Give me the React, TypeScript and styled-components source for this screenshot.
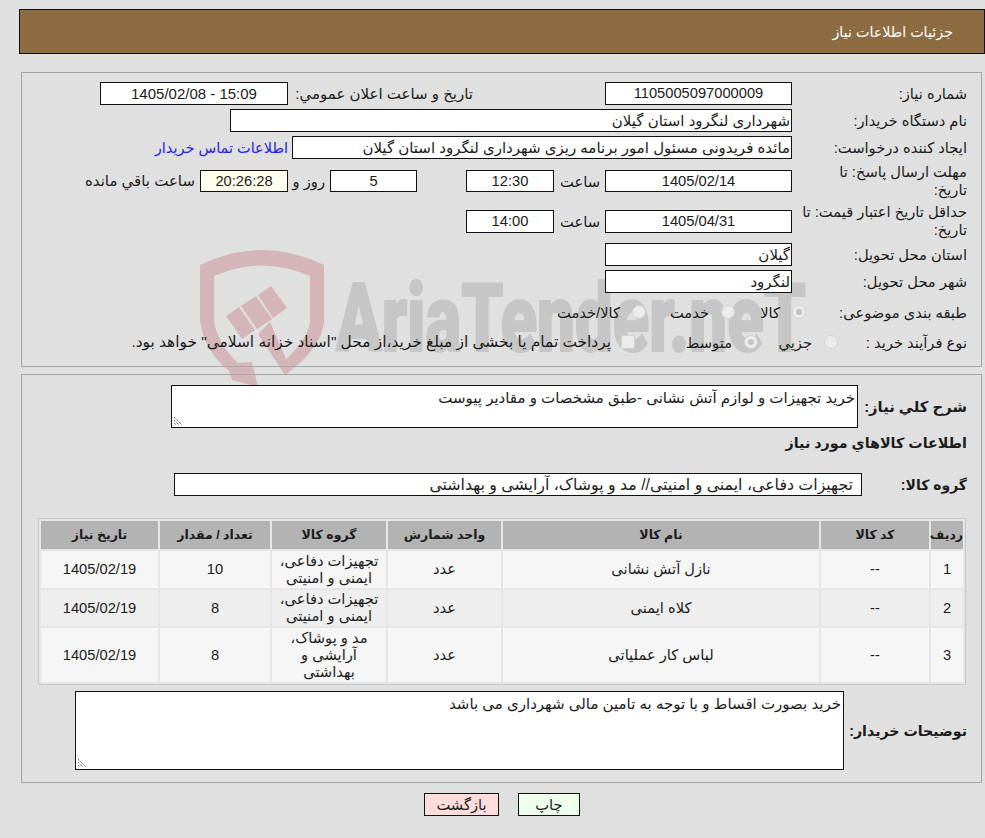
import styled, { createGlobalStyle } from "styled-components";

const GlobalStyle = createGlobalStyle`
  html {
    background: #e0e0e0;
  }

  body {
    margin: 0;
    padding: 0;
    font-family: "Liberation Sans", "DejaVu Sans", sans-serif;
    font-size: 14.7px;
    color: #1c1c1c;
  }
`;

const COLUMNS = [
  { title: "ردیف", width: 32 },
  { title: "کد کالا", width: 108 },
  { title: "نام کالا", width: 316 },
  { title: "واحد شمارش", width: 113 },
  { title: "گروه کالا", width: 114 },
  { title: "تعداد / مقدار", width: 110 },
  { title: "تاریخ نیاز", width: 117 },
];

const ITEMS = [
  { row: "1", name: "نازل آتش نشانی", group: "تجهیزات دفاعی، ایمنی و امنیتی", qty: "10", height: 37 },
  { row: "2", name: "کلاه ایمنی", group: "تجهیزات دفاعی، ایمنی و امنیتی", qty: "8", height: 36 },
  { row: "3", name: "لباس کار عملیاتی", group: "مد و پوشاک، آرایشی و بهداشتی", qty: "8", height: 54 },
];

function Watermark() {
  return (
    <WatermarkSvg viewBox="0 0 700 170" aria-hidden="true">
      <path
        fill="#d5b6b8"
        d="M5 30 Q67 0 129 30 L129 88 Q125 115 90 140 L88 127 Q112 105 115 88 L115 41 Q67 20 19 41 L19 85 Q22 108 43 128 L57 127 L63 152 L37 145 L34 136 Q8 115 5 85 Z"
      />
      <path
        fill="#d5b6b8"
        d="M31 81 L44 72 L60 95 L47 104 Z M46 71 L61 61 L77 84 L62 94 Z M63 60 L76 51 L92 73 L78 83 Z M63 99 L75 87 L95 133 L90 140 Z"
      />
      <WatermarkText x="141" y="116" textLength="470" lengthAdjust="spacingAndGlyphs">
        AriaTender.neT
      </WatermarkText>
    </WatermarkSvg>
  );
}

function Grip() {
  return (
    <GripSvg viewBox="0 0 10 9" aria-hidden="true">
      <path d="M1 0 L9 8 M1 3 L6 8 M1 6 L3 8" stroke="#666" strokeWidth="1" strokeDasharray="1.5 0.7" fill="none" />
    </GripSvg>
  );
}

export default function App() {
  return (
    <>
      <GlobalStyle />
      <Page dir="rtl">
        <Watermark />
        <TitleBar>جزئیات اطلاعات نیاز</TitleBar>

        <Panel>
          <FormRow>
            <Label>شماره نیاز:</Label>
            <DateBox>1105005097000009</DateBox>
            <SideLabel>تاریخ و ساعت اعلان عمومي:</SideLabel>
            <StampBox>1405/02/08 - 15:09</StampBox>
          </FormRow>

          <FormRow>
            <Label>نام دستگاه خریدار:</Label>
            <WideBox $width={562}>شهرداری لنگرود استان گیلان</WideBox>
          </FormRow>

          <FormRow>
            <Label>ایجاد کننده درخواست:</Label>
            <WideBox $width={500}>مائده فریدونی مسئول امور برنامه ریزی شهرداری لنگرود استان گیلان</WideBox>
            <ContactLink href="#">اطلاعات تماس خریدار</ContactLink>
          </FormRow>

          <FormRow>
            <Label>
              مهلت ارسال پاسخ: تا
              <br />
              تاریخ:
            </Label>
            <DateBox $short>1405/02/14</DateBox>
            <Word $width={51}>ساعت</Word>
            <TimeBox $short>12:30</TimeBox>
            <DaysBox $short>5</DaysBox>
            <Word $width={42}>روز و</Word>
            <CountdownBox $short>20:26:28</CountdownBox>
            <Word>ساعت باقي مانده</Word>
          </FormRow>

          <FormRow>
            <Label>
              حداقل تاریخ اعتبار قیمت: تا
              <br />
              تاریخ:
            </Label>
            <DateBox>1405/04/31</DateBox>
            <Word $width={51}>ساعت</Word>
            <TimeBox>14:00</TimeBox>
          </FormRow>

          <FormRow>
            <Label>استان محل تحویل:</Label>
            <WideBox $width={187}>گیلان</WideBox>
          </FormRow>

          <FormRow>
            <Label>شهر محل تحویل:</Label>
            <WideBox $width={187}>لنگرود</WideBox>
          </FormRow>

          <ChoiceRow $height={30}>
            <ChoiceLabel $width={161}>طبقه بندی موضوعی:</ChoiceLabel>
            <Choice $width={71}><Radio $checked />کالا</Choice>
            <Choice $width={89}><Radio />خدمت</Choice>
            <Choice><Radio />کالا/خدمت</Choice>
          </ChoiceRow>

          <ChoiceRow $height={22}>
            <ChoiceLabel $width={129}>نوع فرآیند خرید :</ChoiceLabel>
            <Choice $width={80}><Radio />جزيي</Choice>
            <Choice $width={123}><Radio $checked />متوسط</Choice>
            <NoticeChoice><CheckMark />پرداخت تمام یا بخشی از مبلغ خرید،از محل "اسناد خزانه اسلامی" خواهد بود.</NoticeChoice>
          </ChoiceRow>
        </Panel>

        <LowerPanel>
          <FieldRow>
            <BoldLabel $width={109} $size={14.8}>شرح کلي نیاز:</BoldLabel>
            <NoteBox $width={687} $height={43}>
              خرید تجهیزات و لوازم آتش نشانی -طبق مشخصات و مقادیر پیوست
              <Grip />
            </NoteBox>
          </FieldRow>

          <SectionTitle>اطلاعات کالاهاي مورد نیاز</SectionTitle>

          <GroupRow>
            <BoldLabel $width={105} $size={14}>گروه کالا:</BoldLabel>
            <GroupBox>تجهیزات دفاعی، ایمنی و امنیتی// مد و پوشاک، آرایشی و بهداشتی</GroupBox>
          </GroupRow>

          <ItemsTable>
            <thead>
              <tr>
                {COLUMNS.map((col) => (
                  <HeadCell key={col.title} $width={col.width}>{col.title}</HeadCell>
                ))}
              </tr>
            </thead>
            <tbody>
              {ITEMS.map((item) => (
                <tr key={item.row}>
                  <Cell $height={item.height}>{item.row}</Cell>
                  <Cell>--</Cell>
                  <Cell>{item.name}</Cell>
                  <Cell>عدد</Cell>
                  <Cell>{item.group}</Cell>
                  <Cell>{item.qty}</Cell>
                  <Cell>1405/02/19</Cell>
                </tr>
              ))}
            </tbody>
          </ItemsTable>

          <BuyerRow>
            <BoldLabel $width={123} $size={14.2}>توضیحات خریدار:</BoldLabel>
            <NoteBox $width={769} $height={79}>
              خرید بصورت اقساط و با توجه به تامین مالی شهرداری می باشد
              <Grip />
            </NoteBox>
          </BuyerRow>
        </LowerPanel>

        <Actions>
          <ActionButton $bg="#eeffee" $width={62}>چاپ</ActionButton>
          <ActionButton $bg="#ffdddd" $width={75}>بازگشت</ActionButton>
        </Actions>
      </Page>
    </>
  );
}

const Page = styled.div`
  position: relative;
  width: 985px;
  height: 838px;
  padding: 9px 0 0 19px;
  box-sizing: border-box;
  overflow: hidden;
`;

const WatermarkSvg = styled.svg`
  position: absolute;
  left: 195px;
  top: 235px;
  width: 700px;
  height: 170px;
  z-index: -1;
  direction: ltr;
`;

const WatermarkText = styled.text`
  font-family: Roboto, sans-serif;
  font-weight: 900;
  font-size: 94px;
  fill: #c6c6c6;
  stroke: #c6c6c6;
  stroke-width: 2px;
`;

const TitleBar = styled.div`
  height: 45px;
  box-sizing: border-box;
  background: #8d6c42;
  border: 1px solid #111;
  color: #fff;
  padding-right: 31px;
  font-size: 14.3px;
  line-height: 44px;
`;

const Panel = styled.div`
  margin: 18px 3px 0 2px;
  height: 295px;
  box-sizing: border-box;
  border: 1px solid #a6a6a6;
  padding: 9px 14px 0 0;
  display: flex;
  flex-direction: column;
  gap: 4px;
`;

const FormRow = styled.div`
  display: flex;
  align-items: center;
`;

const Label = styled.div`
  width: 175px;
  flex: none;
  box-sizing: border-box;
  line-height: 18px;
  white-space: nowrap;
`;

const Box = styled.div<{ $short?: boolean }>`
  height: ${(p) => (p.$short ? 22 : 23)}px;
  box-sizing: border-box;
  border: 1px solid #111;
  background: #fff;
  line-height: ${(p) => (p.$short ? 20 : 21)}px;
  white-space: nowrap;
  overflow: hidden;
  flex: none;
`;

const DateBox = styled(Box)`
  width: 187px;
  text-align: center;
`;

const StampBox = styled(Box)`
  width: 188px;
  text-align: center;
  direction: ltr;
  font-size: 15px;
`;

const SideLabel = styled.div`
  width: 185px;
  margin-right: 132px;
  font-size: 15px;
  white-space: nowrap;
`;

const WideBox = styled(Box)<{ $width: number }>`
  width: ${(p) => p.$width}px;
  padding-right: 1px;
  font-size: 15px;
`;

const ContactLink = styled.a`
  margin-right: 4px;
  color: #2222ee;
  font-size: 14.5px;
  text-decoration: none;
  white-space: nowrap;
`;

const Word = styled.span<{ $width?: number }>`
  box-sizing: border-box;
  padding-right: 5px;
  white-space: nowrap;
  ${(p) => (p.$width ? `width: ${p.$width}px;` : "font-size: 15px;")}
`;

const TimeBox = styled(Box)`
  width: 88px;
  text-align: center;
`;

const DaysBox = styled(TimeBox)`
  width: 87px;
  margin-right: 49px;
`;

const CountdownBox = styled(TimeBox)`
  background: #ffffee;
`;

const ChoiceRow = styled.div<{ $height: number }>`
  display: flex;
  align-items: center;
  height: ${(p) => p.$height}px;
`;

const ChoiceLabel = styled.div<{ $width: number }>`
  width: ${(p) => p.$width}px;
  flex: none;
  white-space: nowrap;
`;

const Choice = styled.div<{ $width?: number }>`
  display: flex;
  align-items: center;
  gap: 12px;
  white-space: nowrap;
  flex: none;
  ${(p) => (p.$width ? `width: ${p.$width}px;` : "")}
`;

const NoticeChoice = styled(Choice)`
  gap: 10px;
  font-size: 15.4px;
`;

const Radio = styled.span<{ $checked?: boolean }>`
  width: 14px;
  height: 14px;
  border-radius: 50%;
  background: #ececec;
  box-sizing: border-box;
  border: 1px solid #d2d2d2;
  flex: none;
  display: flex;
  align-items: center;
  justify-content: center;

  &::after {
    content: "";
    width: 6px;
    height: 6px;
    border-radius: 50%;
    background: ${(p) => (p.$checked ? "#c2c2c2" : "transparent")};
  }
`;

const CheckMark = styled.span`
  width: 14px;
  height: 14px;
  border-radius: 2px;
  background: #ececec;
  box-sizing: border-box;
  border: 1px solid #d2d2d2;
  flex: none;
`;

const LowerPanel = styled.div`
  margin: 7px 3px 0 2px;
  height: 409px;
  box-sizing: border-box;
  border: 1px solid #a6a6a6;
  padding: 10px 14px 0 0;
`;

const FieldRow = styled.div`
  display: flex;
  align-items: center;
`;

const BoldLabel = styled.div<{ $width: number; $size: number }>`
  width: ${(p) => p.$width}px;
  flex: none;
  font-weight: 700;
  font-size: ${(p) => p.$size}px;
  white-space: nowrap;
`;

const NoteBox = styled.div<{ $width: number; $height: number }>`
  position: relative;
  width: ${(p) => p.$width}px;
  height: ${(p) => p.$height}px;
  box-sizing: border-box;
  border: 1px solid #111;
  background: #fff;
  padding: 2px;
  font-size: 15px;
  line-height: 20px;
`;

const GripSvg = styled.svg`
  position: absolute;
  left: 1px;
  bottom: 1px;
  width: 10px;
  height: 9px;
`;

const SectionTitle = styled.div`
  font-weight: 700;
  font-size: 14.3px;
  margin-top: 5px;
  line-height: 20px;
`;

const GroupRow = styled.div`
  display: flex;
  align-items: center;
  margin-top: 20px;
`;

const GroupBox = styled(Box)`
  width: 688px;
  padding-right: 8px;
  font-size: 15.8px;
`;

const ItemsTable = styled.table`
  width: 928px;
  margin: 22px 1px 0 0;
  background: #e6e6e6;
  border: 1px solid #c8c8c8;
  border-collapse: separate;
  border-spacing: 2px;
  table-layout: fixed;
  line-height: 17px;

  tbody tr:nth-child(odd) td {
    background: #f6f6f6;
  }

  tbody tr:nth-child(even) td {
    background: #eeeeee;
  }
`;

const HeadCell = styled.th<{ $width: number }>`
  width: ${(p) => p.$width}px;
  height: 28px;
  padding: 0;
  background: #b3b3b3;
  font-size: 12.5px;
  font-weight: 700;
`;

const Cell = styled.td<{ $height?: number }>`
  padding: 0 4px;
  text-align: center;
  ${(p) => (p.$height ? `height: ${p.$height}px;` : "")}
`;

const BuyerRow = styled(FieldRow)`
  margin-top: 6px;
`;

const Actions = styled.div`
  display: flex;
  justify-content: center;
  gap: 19px;
  margin-top: 10px;
`;

const ActionButton = styled.button<{ $bg: string; $width: number }>`
  width: ${(p) => p.$width}px;
  height: 23px;
  padding: 0;
  border: 1px solid #111;
  background: ${(p) => p.$bg};
  font: inherit;
  color: #1c1c1c;
`;
